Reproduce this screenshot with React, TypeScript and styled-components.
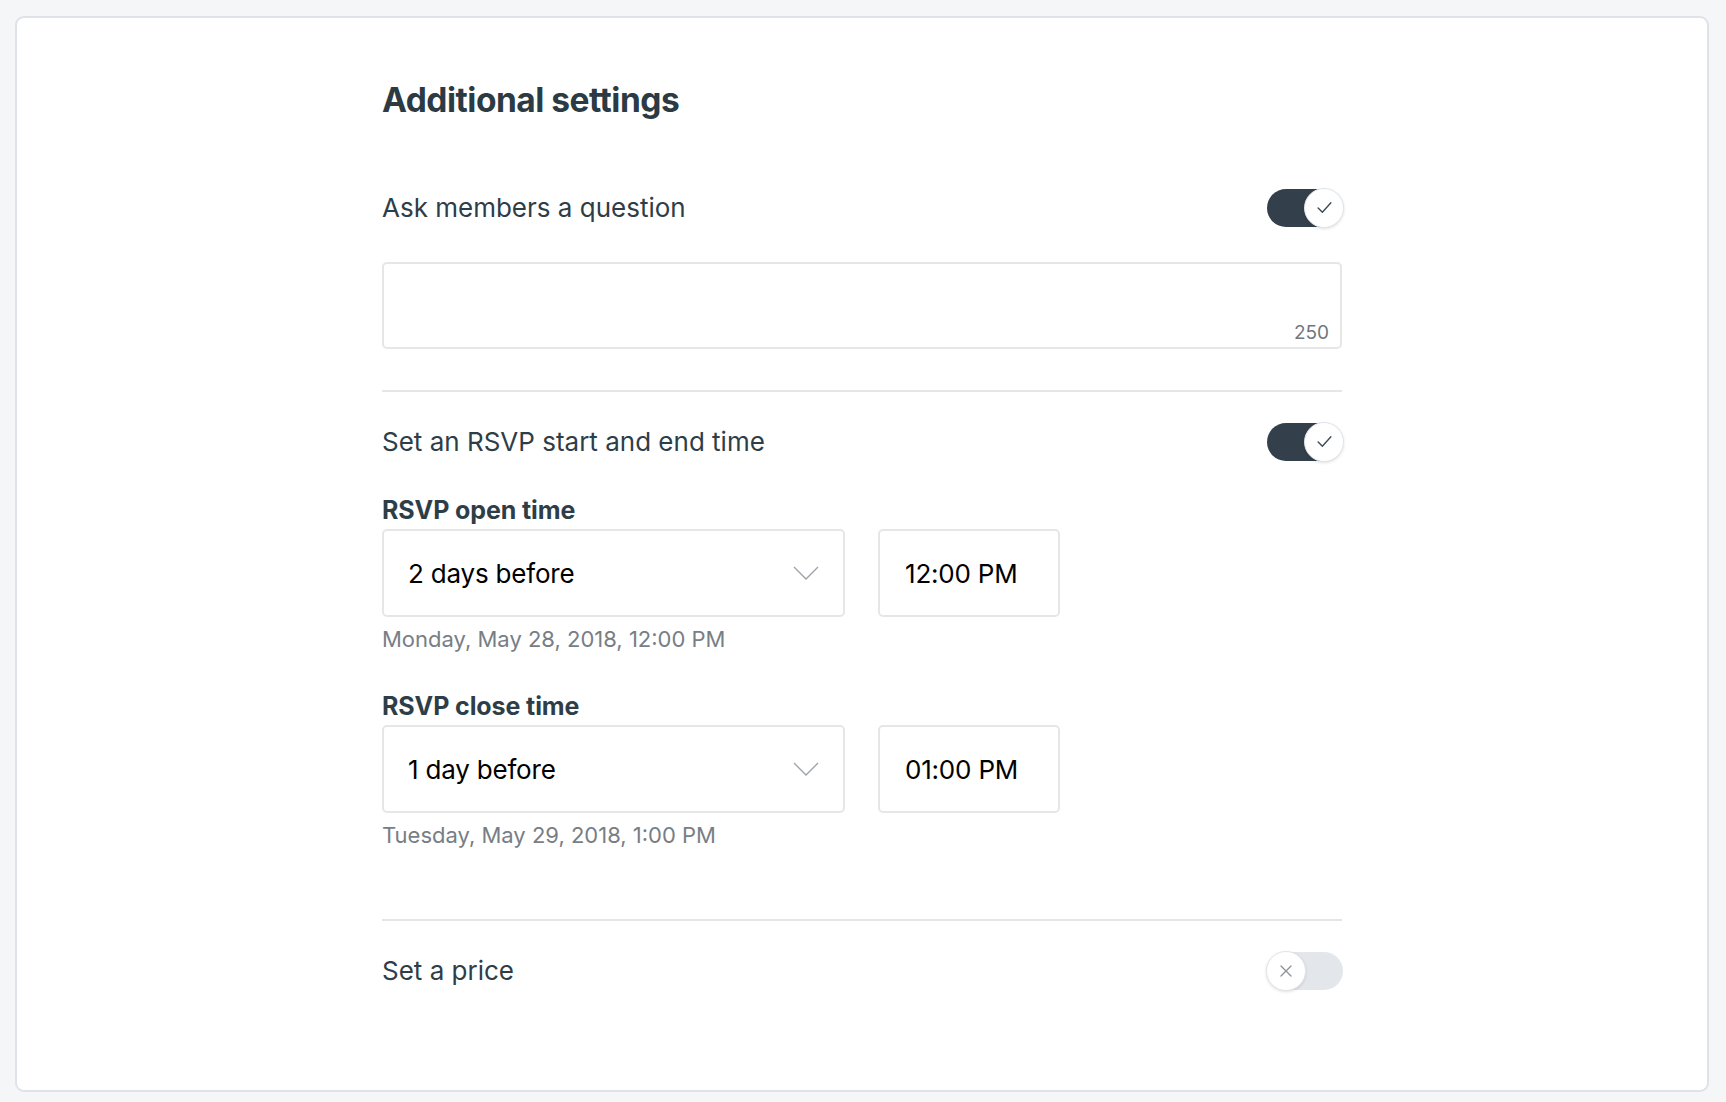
import React, { useState } from 'react';
import styled, { createGlobalStyle } from 'styled-components';

const GlobalStyle = createGlobalStyle`
  html, body {
    margin: 0;
    padding: 0;
    background: #f5f6f8;
  }
  * {
    box-sizing: border-box;
  }
  body {
    font-family: Inter, 'Noto Sans', 'Liberation Sans', sans-serif;
    color: #2e3e48;
  }
`;

type ToggleProps = { on: boolean };

function CheckIcon() {
  return (
    <svg width="17" height="17" viewBox="0 0 16 16" fill="none">
      <polyline points="2,8.5 6,12.5 14,3.5" stroke="#3f4a55" strokeWidth="1.3" strokeLinecap="round" strokeLinejoin="round" />
    </svg>
  );
}

function CrossIcon() {
  return (
    <svg width="14" height="14" viewBox="0 0 14 14" fill="none">
      <path d="M2 2 L12 12 M12 2 L2 12" stroke="#8a9097" strokeWidth="1.3" strokeLinecap="round" />
    </svg>
  );
}

function Chevron() {
  return (
    <svg width="26" height="14" viewBox="0 0 26 14" fill="none">
      <polyline points="1,1 13,13 25,1" stroke="#9ba1a7" strokeWidth="1.3" />
    </svg>
  );
}

function Toggle({ on, onClick }: ToggleProps & { onClick: () => void }) {
  return (
    <Track on={on} onClick={onClick} role="switch" aria-checked={on}>
      <Knob on={on}>{on ? <CheckIcon /> : <CrossIcon />}</Knob>
    </Track>
  );
}

function SelectField({ value }: { value: string }) {
  return (
    <SelectBox>
      <span>{value}</span>
      <Chevron />
    </SelectBox>
  );
}

export default function App() {
  const [askQuestion, setAskQuestion] = useState(true);
  const [rsvpTime, setRsvpTime] = useState(true);
  const [price, setPrice] = useState(false);

  return (
    <>
      <GlobalStyle />
      <Page>
        <Card>
          <Content>
            <Title>Additional settings</Title>

            <SettingRow>
              <RowLabel>Ask members a question</RowLabel>
              <Toggle on={askQuestion} onClick={() => setAskQuestion(!askQuestion)} />
            </SettingRow>
            <QuestionBox>
              <Counter>250</Counter>
            </QuestionBox>

            <Divider />

            <SettingRow>
              <RowLabel>Set an RSVP start and end time</RowLabel>
              <Toggle on={rsvpTime} onClick={() => setRsvpTime(!rsvpTime)} />
            </SettingRow>

            <FieldGroup first>
              <FieldLabel>RSVP open time</FieldLabel>
              <FieldInputs>
                <SelectField value="2 days before" />
                <TimeBox>12:00 PM</TimeBox>
              </FieldInputs>
              <Helper>Monday, May 28, 2018, 12:00 PM</Helper>
            </FieldGroup>

            <FieldGroup>
              <FieldLabel>RSVP close time</FieldLabel>
              <FieldInputs>
                <SelectField value="1 day before" />
                <TimeBox>01:00 PM</TimeBox>
              </FieldInputs>
              <Helper>Tuesday, May 29, 2018, 1:00 PM</Helper>
            </FieldGroup>

            <Divider wide />

            <SettingRow>
              <RowLabel>Set a price</RowLabel>
              <Toggle on={price} onClick={() => setPrice(!price)} />
            </SettingRow>
          </Content>
        </Card>
      </Page>
    </>
  );
}

const Page = styled.div`
  width: 100%;
  height: 1102px;
  padding: 16px 17px 0 15px;
`;

const Card = styled.div`
  width: 100%;
  height: 1076px;
  background: #ffffff;
  border: 2px solid #dfe2e6;
  border-radius: 9px;
  padding-top: 64px;
`;

const Content = styled.div`
  width: 960px;
  margin: 0 auto;
  display: flex;
  flex-direction: column;
`;

const Title = styled.h1`
  margin: 0 0 70px;
  font-size: 33.5px;
  line-height: 36px;
  font-weight: 700;
  letter-spacing: -0.5px;
  color: #2c3a43;
`;

const SettingRow = styled.div`
  display: flex;
  align-items: center;
  justify-content: space-between;
  height: 39px;
`;

const RowLabel = styled.span`
  font-size: 26px;
  color: #2e3e48;
`;

const Track = styled.button<ToggleProps>`
  position: relative;
  width: 76px;
  height: 38px;
  padding: 0;
  border: none;
  border-radius: 19px;
  background: ${(p) => (p.on ? '#333f4a' : '#e3e7eb')};
  cursor: pointer;
  margin-right: -1px;
`;

const Knob = styled.span<ToggleProps>`
  position: absolute;
  top: -1px;
  left: ${(p) => (p.on ? '37px' : '-1px')};
  width: 40px;
  height: 40px;
  border-radius: 50%;
  background: #ffffff;
  border: 1px solid #e2e5e8;
  box-shadow: 0 1px 3px rgba(0, 0, 0, 0.12);
  display: flex;
  align-items: center;
  justify-content: center;
`;

const QuestionBox = styled.div`
  margin-top: 35px;
  height: 87px;
  border: 2px solid #e6e6e6;
  border-radius: 5px;
  display: flex;
  align-items: flex-end;
  justify-content: flex-end;
  padding: 0 11px 3px 0;
`;

const Counter = styled.span`
  font-size: 19px;
  color: #6f777f;
`;

const Divider = styled.hr<{ wide?: boolean }>`
  margin: ${(p) => (p.wide ? '72px 0 30px' : '41px 0 30px')};
  border: none;
  height: 2px;
  background: #e6e6e6;
`;

const FieldGroup = styled.div<{ first?: boolean }>`
  margin-top: ${(p) => (p.first ? '35px' : '41px')};
  display: flex;
  flex-direction: column;
`;

const FieldLabel = styled.label`
  font-size: 25px;
  line-height: 28px;
  font-weight: 700;
  letter-spacing: -0.1px;
  color: #2e3e48;
`;

const FieldInputs = styled.div`
  margin-top: 5px;
  display: flex;
  gap: 33px;
`;

const InputBase = styled.div`
  height: 88px;
  border: 2px solid #e6e6e6;
  border-radius: 5px;
  display: flex;
  align-items: center;
  font-size: 26px;
  color: #000000;
  letter-spacing: -0.2px;
`;

const SelectBox = styled(InputBase)`
  width: 463px;
  padding: 0 24px 0 24px;
  justify-content: space-between;
`;

const TimeBox = styled(InputBase)`
  padding: 0 40px 0 25px;
`;

const Helper = styled.div`
  margin-top: 10px;
  font-size: 22px;
  line-height: 24px;
  color: #777e85;
`;
